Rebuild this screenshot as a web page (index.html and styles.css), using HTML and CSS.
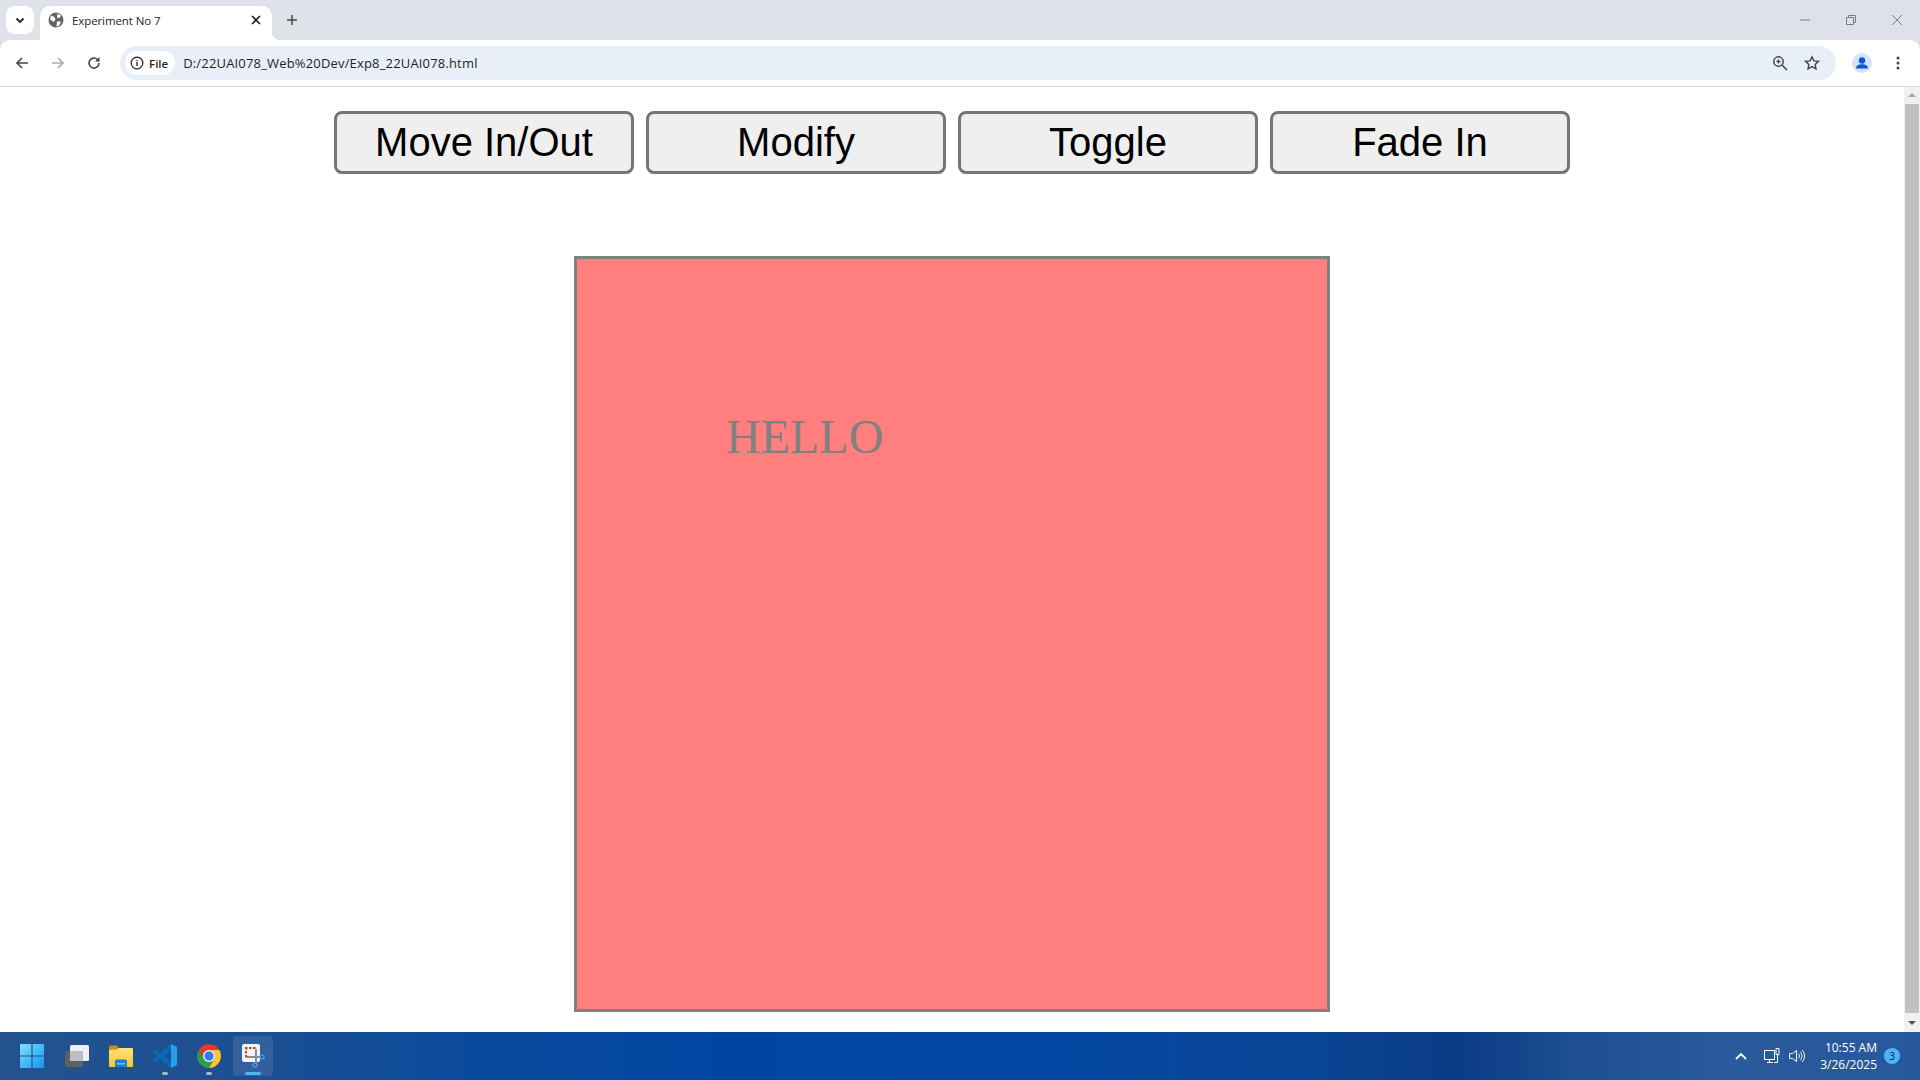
FILE: index.html
```html
<!DOCTYPE html>
<html lang="en">
<head>
    <meta charset="UTF-8">
    <title>Experiment No 7</title>
    <link rel="stylesheet" href="styles.css">
</head>
<body>
    <div class="tabstrip">
        <div class="tab-search">
            <svg width="12" height="12" viewBox="0 0 12 12"><path d="M2.500 4.500 6 8l3.500-3.500" fill="none" stroke="#1f1f1f" stroke-width="1.800"/></svg>
        </div>
        <div class="tab">
            <svg class="favicon" width="16" height="16" viewBox="0 0 16 16"><circle cx="8" cy="8" r="7.500" fill="#5f6368"/><path d="M3 3.500 6.500 5l1 2.500L5.500 10 2 7.500zM9.500 1.500l3.500 2-1.500 2.500-2.500-.5zM9 9.500h4l-2 4.500-2.500.5z" fill="#fff"/></svg>
            <span class="tab-title">Experiment No 7</span>
            <svg class="tab-close" width="12" height="12" viewBox="0 0 12 12"><path d="M2 2l8 8M10 2l-8 8" stroke="#1f1f1f" stroke-width="1.600"/></svg>
        </div>
        <svg class="new-tab" width="12" height="12" viewBox="0 0 12 12"><path d="M6 1v10M1 6h10" stroke="#444746" stroke-width="1.500"/></svg>
        <div class="window-buttons">
            <svg width="12" height="12" viewBox="0 0 12 12"><path d="M1 6h10" stroke="#7a7d82" stroke-width="1"/></svg>
            <svg width="12" height="12" viewBox="0 0 12 12"><path d="M1.500 3.500h7v7h-7zM3.500 3.500v-2h7v7h-2" fill="none" stroke="#7a7d82" stroke-width="1"/></svg>
            <svg width="12" height="12" viewBox="0 0 12 12"><path d="M1 1l10 10M11 1 1 11" stroke="#7a7d82" stroke-width="1"/></svg>
        </div>
    </div>

    <div class="toolbar">
        <svg class="nav-icon" width="16" height="16" viewBox="0 0 16 16"><path d="M14 8H3M8 3 3 8l5 5" fill="none" stroke="#444746" stroke-width="1.600"/></svg>
        <svg class="nav-icon" width="16" height="16" viewBox="0 0 16 16"><path d="M2 8h11M8 3l5 5-5 5" fill="none" stroke="#a6a8ab" stroke-width="1.600"/></svg>
        <svg class="nav-icon" width="16" height="16" viewBox="0 0 16 16"><path d="M13 8a5 5 0 1 1-1.500-3.500L13 6" fill="none" stroke="#444746" stroke-width="1.600"/><path d="M13.500 2v4.500H9z" fill="#444746"/></svg>
        <div class="omnibox">
            <div class="chip">
                <svg width="14" height="14" viewBox="0 0 14 14"><circle cx="7" cy="7" r="5.800" fill="none" stroke="#1f1f1f" stroke-width="1.200"/><path d="M7 6v4M7 4v1.200" stroke="#1f1f1f" stroke-width="1.300"/></svg>
                <span>File</span>
            </div>
            <span class="url">D:/22UAI078_Web%20Dev/Exp8_22UAI078.html</span>
            <svg class="zoom-icon" width="16" height="16" viewBox="0 0 16 16"><circle cx="6.500" cy="6.500" r="4.700" fill="none" stroke="#444746" stroke-width="1.500"/><path d="M10 10l5 5" stroke="#444746" stroke-width="1.600"/><path d="M4.500 6.500h4M6.500 4.500v4" stroke="#444746" stroke-width="1.300"/></svg>
            <svg class="star-icon" width="16" height="16" viewBox="0 0 16 16"><path d="M8 1.800l1.900 4.100 4.500.5-3.300 3 .9 4.500L8 11.600l-4 2.300.9-4.500-3.300-3 4.500-.5z" fill="none" stroke="#444746" stroke-width="1.400"/></svg>
        </div>
        <div class="avatar">
            <svg width="20" height="20" viewBox="0 0 20 20"><circle cx="10" cy="10" r="10" fill="#d3e3fd"/><circle cx="10" cy="7.500" r="3.200" fill="#0b57d0"/><path d="M4 15.500c0-3 3-4.200 6-4.200s6 1.200 6 4.200z" fill="#0b57d0"/></svg>
        </div>
        <svg class="menu-icon" width="16" height="16" viewBox="0 0 16 16"><circle cx="8" cy="3" r="1.500" fill="#444746"/><circle cx="8" cy="8" r="1.500" fill="#444746"/><circle cx="8" cy="13" r="1.500" fill="#444746"/></svg>
    </div>

    <div class="viewport">
        <main class="page">
            <div class="controls">
                <button class="btn">Move In/Out</button>
                <button class="btn">Modify</button>
                <button class="btn">Toggle</button>
                <button class="btn">Fade In</button>
            </div>
            <div class="box">
                <div class="hello">HELLO</div>
            </div>
        </main>
        <div class="scrollbar">
            <div class="arrow arrow-up"></div>
            <div class="thumb"></div>
            <div class="arrow arrow-down"></div>
        </div>
    </div>

    <footer class="taskbar">
        <div class="task-icons">
            <div class="task-item">
                <svg width="24" height="24" viewBox="0 0 24 24">
                    <defs><linearGradient id="winGrad" x1="0" y1="0" x2="1" y2="1"><stop offset="0" stop-color="#7be3fb"/><stop offset="1" stop-color="#1592f5"/></linearGradient></defs>
                    <path d="M0 1a1 1 0 0 1 1-1h10.400v11.400H0zM12.600 0H23a1 1 0 0 1 1 1v10.400H12.600zM0 12.600h11.400V24H1a1 1 0 0 1-1-1zM12.600 12.600H24V23a1 1 0 0 1-1 1H12.600z" fill="url(#winGrad)"/>
                </svg>
            </div>
            <div class="task-item">
                <svg width="24" height="24" viewBox="0 0 24 24"><rect x="5" y="1" width="19" height="16" rx="1.500" fill="#eef0f6"/><rect x="0" y="7" width="18" height="16" rx="1.500" fill="#5e6064"/><path d="M5 7h13v10H5z" fill="#bcbec2"/></svg>
            </div>
            <div class="task-item">
                <svg width="24" height="24" viewBox="0 0 24 24">
                    <defs><linearGradient id="folderGrad" x1="0" y1="0" x2="0" y2="1"><stop offset="0" stop-color="#ffe27a"/><stop offset="1" stop-color="#f8c733"/></linearGradient></defs>
                    <path d="M0 3a1.500 1.500 0 0 1 1.500-1.500h6L10 4h14v3H0z" fill="#c98f10"/><path d="M0 6l8-.5L10 4h12.500A1.500 1.500 0 0 1 24 5.500V22a1 1 0 0 1-1 1H1a1 1 0 0 1-1-1z" fill="url(#folderGrad)"/><path d="M6 23v-6a1.500 1.500 0 0 1 1.500-1.500h9A1.500 1.500 0 0 1 18 17v6z" fill="#1b7fd4"/><path d="M8 19h8v1.500H8z" fill="#7cc4f2"/>
                </svg>
            </div>
            <div class="task-item task-dot">
                <svg width="24" height="24" viewBox="0 0 24 24"><path d="M23.150 2.587 18.210.21a1.494 1.494 0 0 0-1.705.29l-9.460 8.630-4.120-3.128a.999.999 0 0 0-1.276.057L.327 7.261A1 1 0 0 0 .326 8.740L3.899 12 .326 15.260a1 1 0 0 0 .001 1.479L1.650 17.940a.999.999 0 0 0 1.276.057l4.120-3.128 9.460 8.630a1.492 1.492 0 0 0 1.704.29l4.942-2.377A1.500 1.500 0 0 0 24 20.060V3.939a1.500 1.500 0 0 0-.85-1.352zm-5.146 14.861L10.826 12l7.178-5.448v10.896z" fill="#0a69b4"/><path d="M18 .1l5.150 2.487A1.500 1.500 0 0 1 24 3.939V20.060a1.500 1.500 0 0 1-.85 1.352L18 23.900z" fill="#23a0ef"/></svg>
            </div>
            <div class="task-item task-dot">
                <svg width="24" height="24" viewBox="0 0 24 24"><path d="M12 6H22.390A12 12 0 0 0 1.610 6L6.800 15A6 6 0 0 1 12 6z" fill="#e5392b"/><path d="M6.800 15 1.610 6A12 12 0 0 0 12 24L17.200 15A6 6 0 0 1 6.800 15z" fill="#2e9d46"/><path d="M17.200 15 12 24A12 12 0 0 0 22.390 6H12A6 6 0 0 1 17.200 15z" fill="#fbc62f"/><circle cx="12" cy="12" r="6" fill="#fff"/><circle cx="12" cy="12" r="4.700" fill="#3579e6"/></svg>
            </div>
            <div class="task-item task-active">
                <svg width="24" height="24" viewBox="0 0 24 24"><rect x="1" y="0" width="18" height="18" rx="2" fill="#f3f3f5"/><path d="M4 3h2.500v2.500H4zM8 3h2.500v2H8zM12 3h2.500v2H12zM4 7h2v2.500H4zM4 11h2v2.500H4z" fill="#c4432f"/><path d="M15 5v14M6 13h14" stroke="#868e99" stroke-width="2"/><circle cx="14" cy="21" r="2" fill="none" stroke="#3a9be8" stroke-width="1.600"/><circle cx="21" cy="13" r="2" fill="none" stroke="#3a9be8" stroke-width="1.600"/></svg>
            </div>
        </div>
        <div class="tray">
            <svg class="tray-chevron" width="12" height="8" viewBox="0 0 12 8"><path d="M1 7l5-5 5 5" fill="none" stroke="#fff" stroke-width="1.800"/></svg>
            <svg class="tray-net" width="16" height="16" viewBox="0 0 16 16"><path d="M.5 2.500h10v9H.5zM5.500 11.500v3M3 14.500h6" fill="none" stroke="#fff"/><path d="M12 .5h3v6h-3zM13.500 6.500v8H10" fill="none" stroke="#fff"/></svg>
            <svg class="tray-sound" width="16" height="16" viewBox="0 0 17 16"><path d="M.5 5.500h3L8 2v12L3.500 10.500h-3z" fill="none" stroke="#fff"/><path d="M10 5.500a3.500 3.500 0 0 1 0 5M12 3.500a6.500 6.500 0 0 1 0 9M14 1.500a9.500 9.500 0 0 1 0 13" fill="none" stroke="#fff"/></svg>
            <div class="clock">
                <span>10:55 AM</span>
                <span>3/26/2025</span>
            </div>
            <div class="badge">3</div>
        </div>
    </footer>
</body>
</html>
```
FILE: styles.css
```css
* {
    box-sizing: border-box;
}
body {
    margin: 0;
    height: 1080px;
    overflow: hidden;
    display: flex;
    flex-direction: column;
    background-color: #dee1e8;
    font-family: "Open Sans", "Noto Sans", sans-serif;
}

/* browser tabs */
.tabstrip {
    height: 40px;
    flex-shrink: 0;
    display: flex;
    align-items: flex-end;
    padding-left: 6px;
}
.tab-search {
    width: 28px;
    height: 28px;
    margin-bottom: 6px;
    margin-right: 6px;
    display: flex;
    justify-content: center;
    align-items: center;
    background-color: white;
    border-radius: 9px;
}
.tab {
    width: 232px;
    height: 34px;
    display: flex;
    align-items: center;
    padding: 0 10px 6px 8px;
    background-color: white;
    border-radius: 10px 10px 0 0;
    position: relative;
}
.tab::after {
    content: "";
    position: absolute;
    right: -8px;
    bottom: 0;
    width: 8px;
    height: 8px;
    background: radial-gradient(circle at 100% 0, #dee1e8 8px, white 8.5px);
}
.favicon {
    margin-right: 8px;
}
.tab-title {
    flex: 1;
    font-size: 11.5px;
    color: #1f1f1f;
    letter-spacing: -0.1px;
}
.new-tab {
    margin: 0 0 14px 14px;
}
.window-buttons {
    margin-left: auto;
    margin-right: 17px;
    margin-bottom: 14px;
    display: flex;
    gap: 34px;
}

/* address bar */
.toolbar {
    height: 47px;
    flex-shrink: 0;
    display: flex;
    align-items: center;
    padding: 0 14px 0 14px;
    background-color: white;
    border-bottom: 1px solid #d6d8dc;
    border-radius: 10px 10px 0 0;
}
.nav-icon {
    margin-right: 20px;
}
.omnibox {
    flex: 1;
    height: 34px;
    margin-left: -2px;
    display: flex;
    align-items: center;
    padding: 0 16px 0 5px;
    background-color: #e9eff9;
    border-radius: 17px;
}
.chip {
    height: 24px;
    display: flex;
    align-items: center;
    gap: 5px;
    padding: 0 7px 0 5px;
    background-color: white;
    border-radius: 12px;
    font-size: 11.5px;
    font-weight: 600;
    color: #1f1f1f;
}
.url {
    flex: 1;
    margin-left: 8px;
    font-size: 13px;
    color: #1f1f1f;
    letter-spacing: 0.17px;
}
.star-icon {
    margin-left: 16px;
}
.avatar {
    margin-left: 16px;
    margin-right: 18px;
    height: 20px;
}

/* page */
.viewport {
    flex: 1;
    min-height: 0;
    display: flex;
    background-color: white;
}
.page {
    flex: 1;
    display: flex;
    flex-direction: column;
    align-items: center;
    padding-top: 24px;
}
.controls {
    display: flex;
    gap: 12px;
}
.btn {
    width: 300px;
    height: 63px;
    padding: 0;
    font-family: "Liberation Sans", Arial, sans-serif;
    font-size: 40px;
    color: black;
    background-color: #efefef;
    border: 3px solid #767676;
    border-radius: 8px;
}
.box {
    width: 756px;
    height: 756px;
    margin-top: 82px;
    padding: 150px 0 0 149px;
    background-color: #ff7f7f;
    border: 3px solid #808080;
}
.hello {
    font-family: "Liberation Serif", "Times New Roman", serif;
    font-size: 48px;
    line-height: 55px;
    color: #808080;
}
.scrollbar {
    width: 16px;
    display: flex;
    flex-direction: column;
    align-items: center;
    background-color: #f1f1f1;
}
.thumb {
    flex: 1;
    width: 14px;
    margin-bottom: 2px;
    background-color: #c1c1c1;
}
.arrow {
    height: 17px;
    width: 16px;
    position: relative;
}
.arrow::after {
    content: "";
    position: absolute;
    left: 4px;
    top: 6px;
    border-left: 4px solid transparent;
    border-right: 4px solid transparent;
}
.arrow-up::after {
    border-bottom: 4px solid #a3a3a3;
}
.arrow-down::after {
    border-top: 4px solid #505050;
}

/* windows taskbar */
.taskbar {
    height: 48px;
    flex-shrink: 0;
    display: flex;
    align-items: center;
    justify-content: space-between;
    padding-left: 12px;
    padding-right: 20px;
    background: linear-gradient(90deg, #23528f 0%, #1c4f92 13%, #0a4a9c 25%, #0045a2 38%, #0347a2 55%, #0a4595 68%, #0a3b85 76%, #1d4f92 82%, #2a5a9c 90%, #27589b 100%);
}
.task-icons {
    display: flex;
    gap: 4px;
}
.task-item {
    width: 40px;
    height: 40px;
    display: flex;
    justify-content: center;
    align-items: center;
    position: relative;
    border-radius: 4px;
}
.task-item:first-child {
    margin-right: 1px;
}
.task-dot::after,
.task-active::after {
    content: "";
    position: absolute;
    bottom: 1px;
    left: 17px;
    width: 6px;
    height: 3px;
    border-radius: 2px;
    background-color: #a9b8cd;
}
.task-active {
    background-color: rgba(255, 255, 255, 0.1);
}
.task-active::after {
    left: 12px;
    width: 16px;
    background-color: #4fb5f5;
}
.tray {
    display: flex;
    align-items: center;
}
.tray-net {
    margin-left: 17px;
}
.tray-sound {
    margin-left: 9px;
}
.clock {
    display: flex;
    flex-direction: column;
    align-items: flex-end;
    margin-left: 15px;
    font-size: 12px;
    line-height: 17px;
    color: white;
}
.badge {
    width: 16px;
    height: 16px;
    margin-left: 7px;
    display: flex;
    justify-content: center;
    align-items: center;
    font-size: 10px;
    color: #10243f;
    background-color: #4cb4f4;
    border-radius: 50%;
}
```
